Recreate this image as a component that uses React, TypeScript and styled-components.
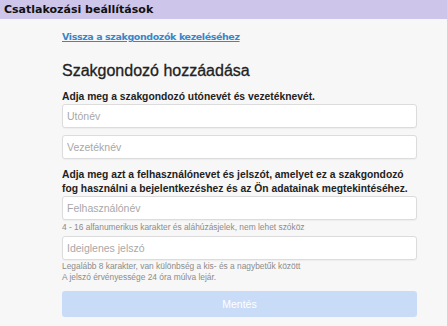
import React, { FC } from 'react';
import styled, { createGlobalStyle } from 'styled-components';

const GlobalStyle = createGlobalStyle`
  html, body {
    margin: 0;
    padding: 0;
    background: #f7f7f7;
  }
  * {
    box-sizing: border-box;
  }
`;

const Page = styled.div`
  width: 447px;
  height: 326px;
  overflow: hidden;
  background: #f7f7f7;
  font-family: "Liberation Sans", Arial, sans-serif;
`;

const TopBar = styled.div`
  height: 19px;
  background: #cdc5ea;
  padding: 0 4px;
  display: flex;
  align-items: center;
  font-family: "DejaVu Sans", Verdana, sans-serif;
  font-weight: bold;
  font-size: 11px;
  color: #111;
`;

const Content = styled.div`
  width: 355px;
  margin-left: 62px;
  padding-top: 12px;
`;

const BackLink = styled.a`
  display: block;
  width: fit-content;
  font-family: "DejaVu Sans", Verdana, sans-serif;
  font-weight: bold;
  font-size: 9.5px;
  line-height: 12px;
  letter-spacing: -0.4px;
  color: #3a86c8;
  text-decoration: underline;
  cursor: pointer;
`;

const Heading = styled.h1`
  margin: 18px 0 0;
  font-size: 16px;
  line-height: 19px;
  font-weight: normal;
  color: #222;
  -webkit-text-stroke: 0.3px #222;
`;

const Label = styled.div<{ $top: number }>`
  margin-top: ${p => p.$top}px;
  font-size: 10.3px;
  line-height: ${p => (p.$top > 9 ? 13 : 14)}px;
  font-weight: bold;
  color: #222;
`;

const Field = styled.input<{ $top: number }>`
  display: block;
  width: 100%;
  height: 24px;
  margin-top: ${p => p.$top}px;
  padding: 0 4px;
  border: 1px solid #dcdcdc;
  border-radius: 3px;
  background: #fff;
  box-shadow: 0 1px 1px rgba(0, 0, 0, 0.04);
  font-family: "Liberation Sans", Arial, sans-serif;
  font-size: 10.5px;
  color: #333;
  outline: none;
  &::placeholder {
    color: #a8a8a8;
  }
`;

const Hint = styled.div<{ $top: number }>`
  margin-top: ${p => p.$top}px;
  font-size: 8.4px;
  line-height: 11px;
  color: #8c8c8c;
`;

const SaveButton = styled.button`
  display: block;
  width: 100%;
  height: 26px;
  margin-top: 8px;
  border: none;
  border-radius: 3px;
  background: #c8dcf8;
  color: #fff;
  font-family: "Liberation Sans", Arial, sans-serif;
  font-size: 10.5px;
  cursor: default;
`;

const App: FC = () => {
  return (
    <Page>
      <GlobalStyle />
      <TopBar>Csatlakozási beállítások</TopBar>
      <Content>
        <BackLink>Vissza a szakgondozók kezeléséhez</BackLink>
        <Heading>Szakgondozó hozzáadása</Heading>
        <Label $top={10}>Adja meg a szakgondozó utónevét és vezetéknevét.</Label>
        <Field $top={1} placeholder="Utónév" />
        <Field $top={7} placeholder="Vezetéknév" />
        <Label $top={9}>
          Adja meg azt a felhasználónevet és jelszót, amelyet ez a szakgondozó
          fog használni a bejelentkezéshez és az Ön adatainak megtekintéséhez.
        </Label>
        <Field $top={0} placeholder="Felhasználónév" />
        <Hint $top={2}>4 - 16 alfanumerikus karakter és aláhúzásjelek, nem lehet szóköz</Hint>
        <Field $top={3} placeholder="Ideiglenes jelszó" />
        <Hint $top={1}>
          Legalább 8 karakter, van különbség a kis- és a nagybetűk között
          <br />
          A jelszó érvényessége 24 óra múlva lejár.
        </Hint>
        <SaveButton disabled>Mentés</SaveButton>
      </Content>
    </Page>
  );
};

export default App;
